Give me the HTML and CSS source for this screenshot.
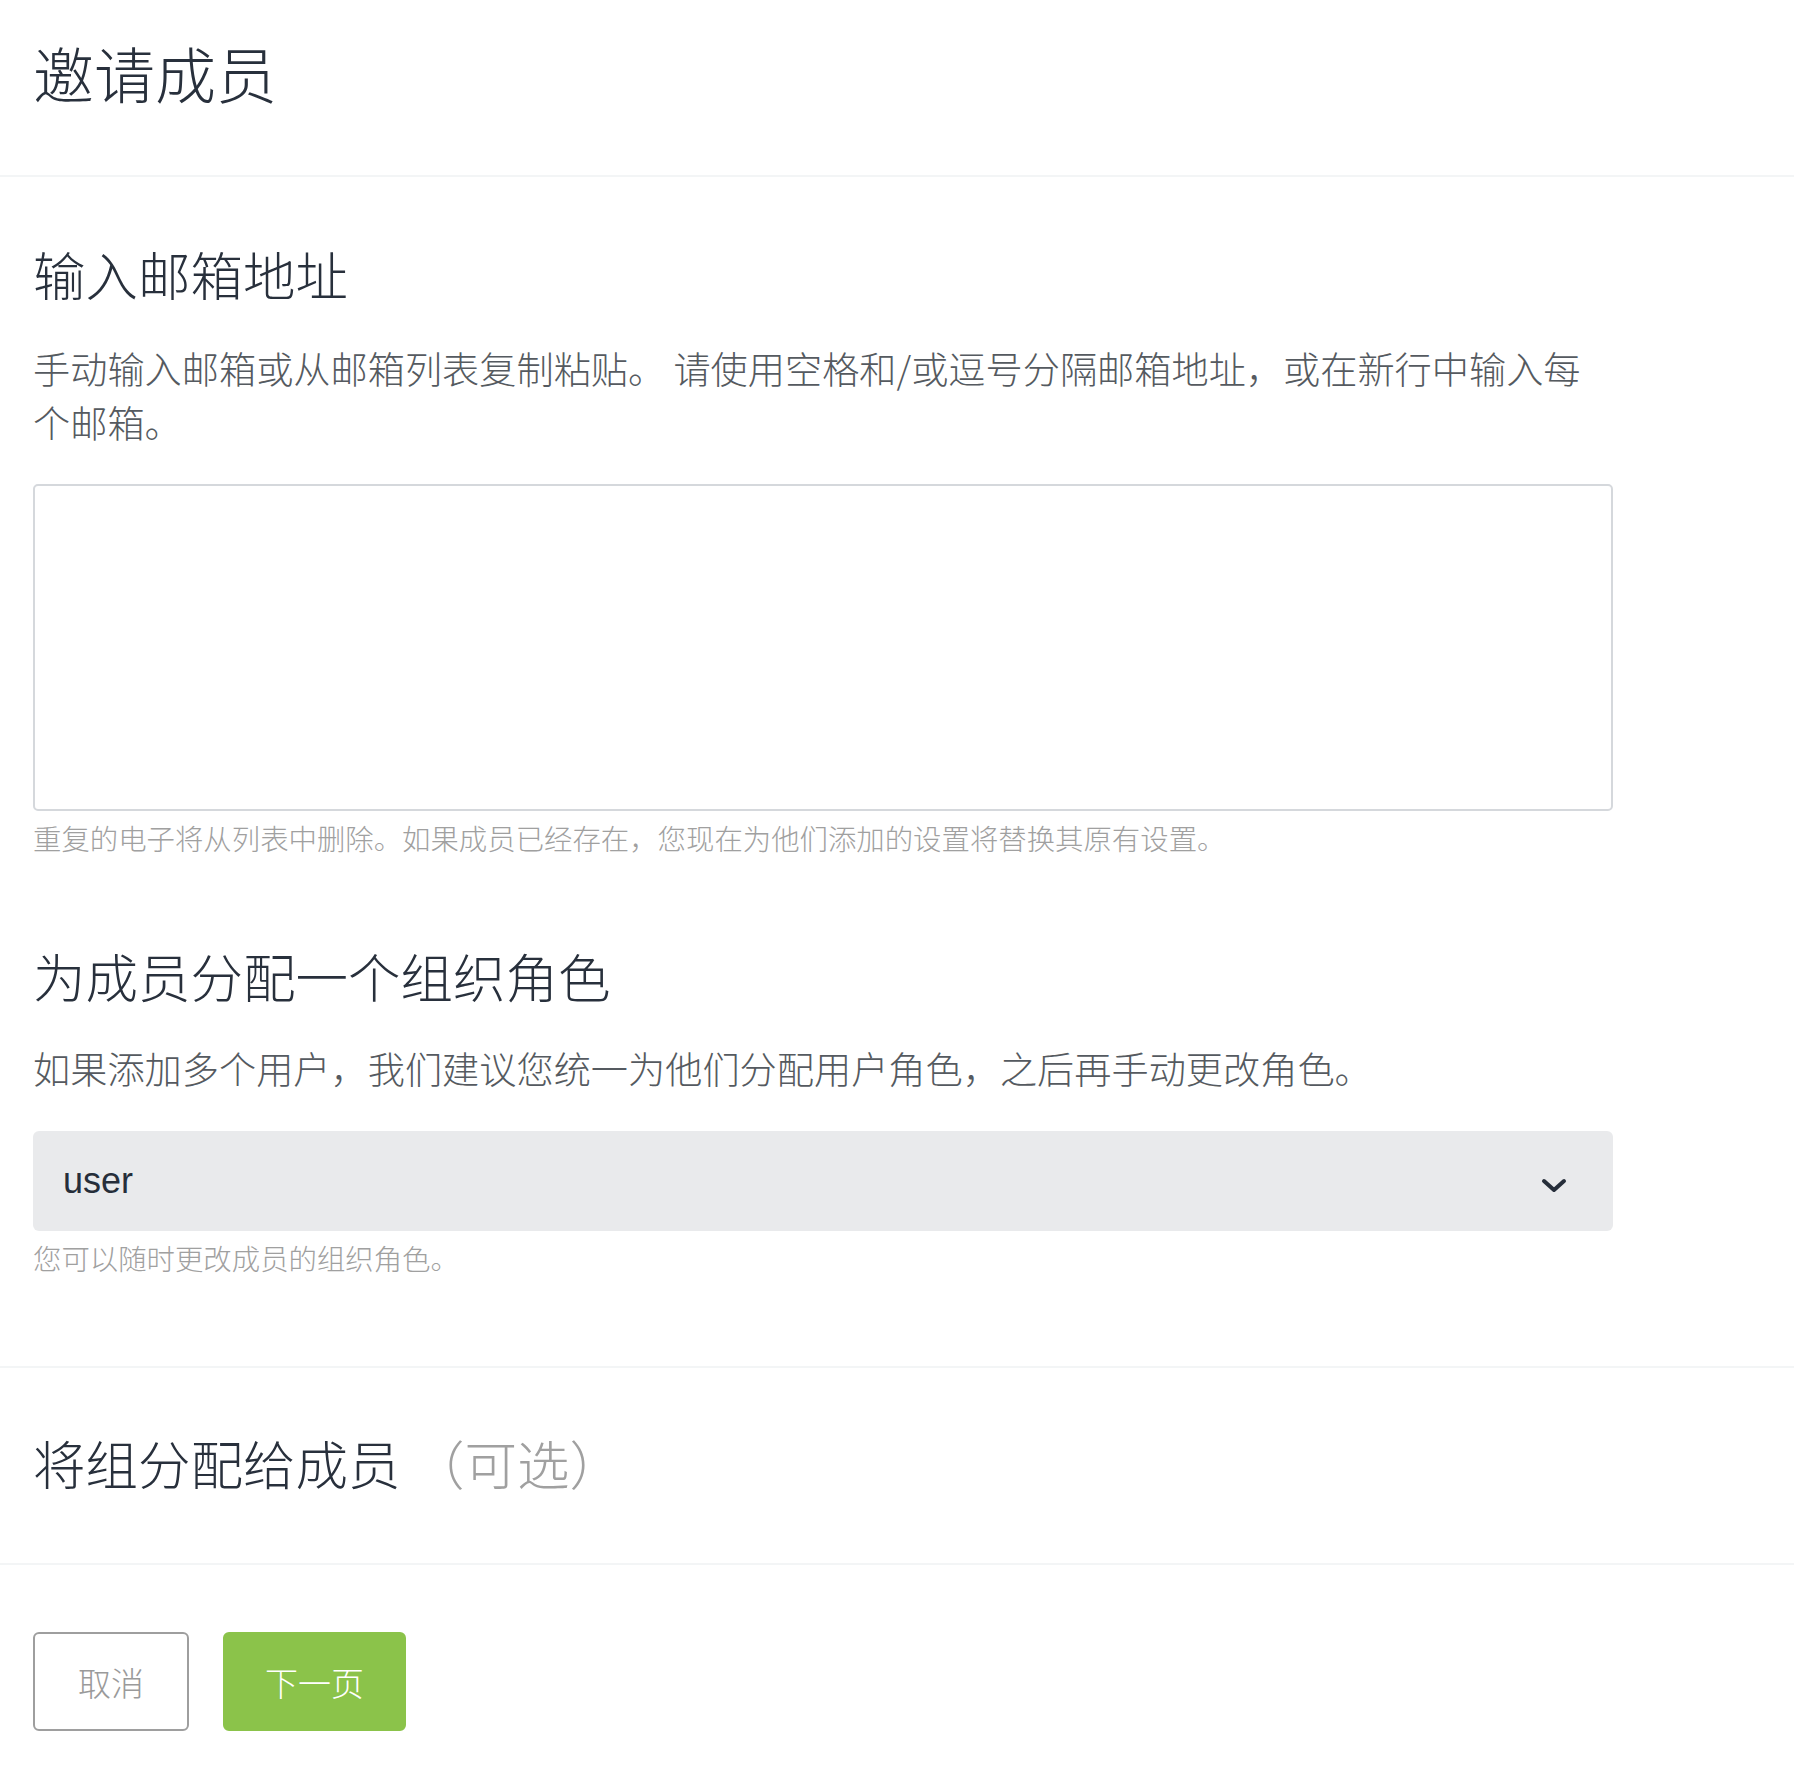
FILE: index.html
```html
<!DOCTYPE html>
<html lang="zh-CN">
<head>
    <meta charset="UTF-8">
    <meta name="viewport" content="width=device-width, initial-scale=1.0">
    <title>邀请成员</title>
    <link rel="stylesheet" href="styles.css">
</head>
<body>
    <div class="page-header">
        <h1 class="page-title">邀请成员</h1>
    </div>

    <div class="section">
        <div class="section-inner">
            <h2 class="section-title">输入邮箱地址</h2>
            <p class="section-desc">手动输入邮箱或从邮箱列表复制粘贴。 请使用空格和/或逗号分隔邮箱地址，或在新行中输入每个邮箱。</p>
            <textarea class="email-input"></textarea>
            <div class="hint">重复的电子将从列表中删除。如果成员已经存在，您现在为他们添加的设置将替换其原有设置。</div>

            <h2 class="section-title role-title">为成员分配一个组织角色</h2>
            <p class="section-desc">如果添加多个用户，我们建议您统一为他们分配用户角色，之后再手动更改角色。</p>
            <div class="select">
                <span class="select-value">user</span>
                <svg class="chevron" width="26" height="16" viewBox="0 0 26 16">
                    <path d="M3 3 L13 12 L23 3" fill="none" stroke="#262e3a" stroke-width="4" stroke-linecap="round" stroke-linejoin="round"/>
                </svg>
            </div>
            <div class="hint">您可以随时更改成员的组织角色。</div>
        </div>
    </div>

    <div class="section section-groups">
        <h2 class="section-title">将组分配给成员 <span class="optional">（可选）</span></h2>
    </div>

    <div class="footer">
        <button class="btn btn-cancel">取消</button>
        <button class="btn btn-next">下一页</button>
    </div>
</body>
</html>
```

FILE: styles.css
```css
body {
    margin: 0;
    padding: 0;
    background: #ffffff;
    font-family: 'Noto Sans CJK SC', 'Noto Sans', sans-serif;
    font-weight: 300;
    color: #28303c;
}

.page-header {
    padding: 37px 33px 66px;
    border-bottom: 2px solid #f3f5f6;
}

.page-title {
    margin: 0;
    font-size: 61px;
    line-height: 72px;
    font-weight: 300;
    color: #28303c;
}

.section {
    padding: 65px 33px 88px;
    border-bottom: 2px solid #f3f5f6;
}

.section-inner {
    max-width: 1580px;
}

.section-groups {
    padding: 63px 33px 70px;
}

.section-title {
    margin: 0;
    font-size: 52.5px;
    line-height: 62px;
    font-weight: 300;
    color: #28303c;
}

.role-title {
    margin-top: 86px;
}

.optional {
    color: #a0a0a0;
}

.section-desc {
    max-width: 1550px;
    margin: 37px 0 0;
    font-size: 37.2px;
    line-height: 54px;
    color: #555a60;
}

.role-title + .section-desc {
    margin-top: 35px;
}

.email-input {
    display: block;
    box-sizing: border-box;
    width: 100%;
    height: 327px;
    margin-top: 35px;
    border: 2px solid #d5d8dc;
    border-radius: 5px;
    resize: none;
    font-family: inherit;
    font-size: 32px;
}

.hint {
    margin-top: 7px;
    font-size: 28.4px;
    line-height: 40px;
    color: #a0a0a0;
}

.select {
    display: flex;
    align-items: center;
    justify-content: space-between;
    box-sizing: border-box;
    height: 100px;
    margin-top: 36px;
    padding: 0 46px 0 30px;
    background: #e9eaec;
    border-radius: 6px;
}

.select + .hint {
    margin-top: 7px;
}

.select-value {
    font-family: 'Liberation Sans', Arial, sans-serif;
    font-weight: 400;
    font-size: 36px;
    color: #262e3a;
}

.chevron {
    display: block;
    margin-top: 9px;
}

.footer {
    display: flex;
    gap: 34px;
    padding: 67px 33px;
}

.btn {
    box-sizing: border-box;
    height: 99px;
    padding: 0 43px;
    border-radius: 6px;
    font-family: inherit;
    font-weight: 300;
    font-size: 33px;
    cursor: pointer;
}

.btn-cancel {
    background: #ffffff;
    border: 2px solid #9e9e9e;
    color: #9a9a9a;
}

.btn-next {
    padding: 0 40px;
    background: #8bc34a;
    border: 2px solid #8bc34a;
    color: #ffffff;
}
```
